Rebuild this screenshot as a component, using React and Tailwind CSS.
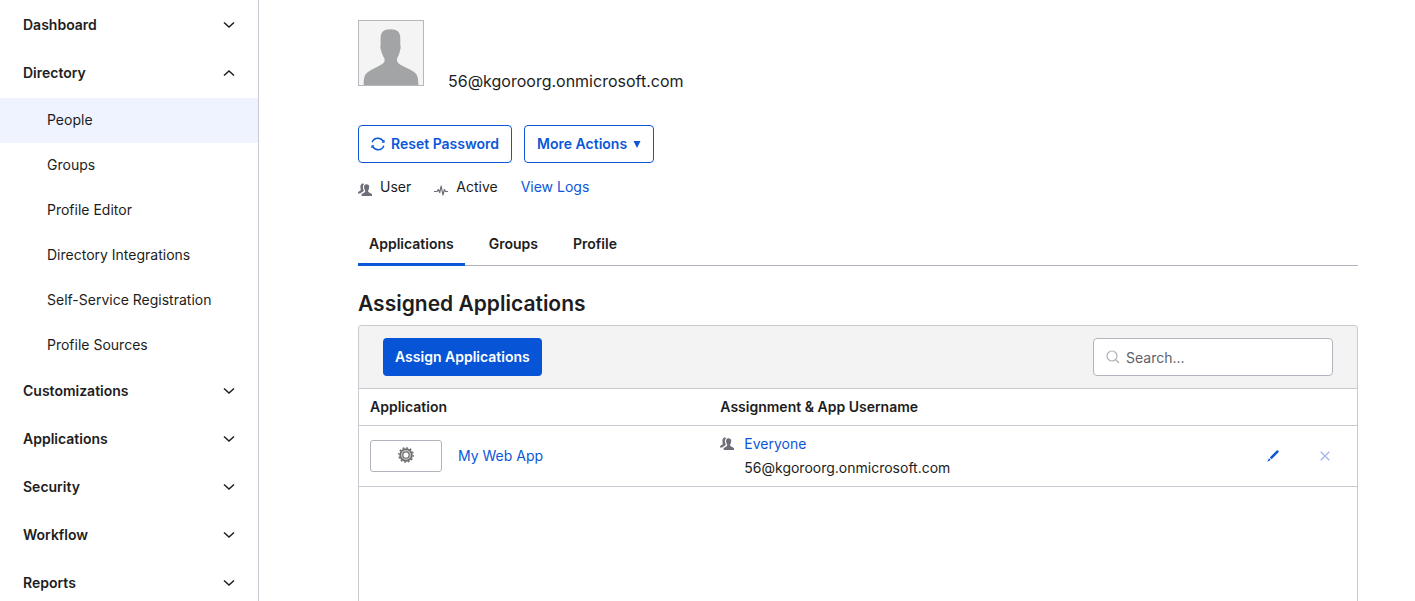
import React from "react";

const directoryItems = [
  "People",
  "Groups",
  "Profile Editor",
  "Directory Integrations",
  "Self-Service Registration",
  "Profile Sources",
];

const sections = [
  { label: "Dashboard" },
  { label: "Directory", items: directoryItems },
  { label: "Customizations" },
  { label: "Applications" },
  { label: "Security" },
  { label: "Workflow" },
  { label: "Reports" },
];

function Chevron({ up }) {
  return (
    <svg width="12" height="8" viewBox="0 0 12 8" fill="none" stroke="currentColor" strokeWidth="1.5" aria-hidden="true">
      <path d={up ? "M1 6.5 6 2l5 4.5" : "M1 1.5 6 6l5-4.5"} />
    </svg>
  );
}

function PeopleIcon() {
  return (
    <svg width="14" height="14" viewBox="0 0 14 14" fill="#6e6e78" aria-hidden="true" className="shrink-0">
      <path d="M8.600 1.200c1.700 0 2.700 1.200 2.600 2.900-.1 1.500-.5 2.600-1 3.500-.2 1 .1 1.500.9 1.900l2 .9c.6.300.9.700.9 1.400v1.200H3.600v-1.200c0-.7.3-1.100.9-1.400l1.900-.9c.7-.4.9-.9.700-1.900-.5-.9-1-2-1.100-3.500C5.900 2.400 6.900 1.200 8.600 1.200Z" />
      <path d="M3.700.8C4.500.2 5.600.3 6.200.9 5.200 1.700 4.800 2.900 4.900 4.400c.1 1.200.4 2.100.8 2.800 0 .8-.3 1.200-1 1.500l-1.200.7c-.6.300-1 .7-1.200 1.100H0v-.8c0-.6.3-.9.800-1.200l1.300-.8c.7-.4.8-.9.600-1.700C2.100 4.300 2.300 1.700 3.700.8Z" />
    </svg>
  );
}

function PulseIcon() {
  return (
    <svg width="14" height="14" viewBox="0 0 14 14" fill="none" stroke="#6e6e78" strokeWidth="1.2" strokeLinejoin="round" aria-hidden="true" className="shrink-0">
      <path d="M0 8.500h3L4.300 6.500l1.400 3L7.200 3l1.700 9L10.400 6.500l1.100 2H14" />
    </svg>
  );
}

function RefreshIcon() {
  return (
    <svg width="14" height="14" viewBox="0 0 14 14" fill="none" stroke="currentColor" strokeWidth="1.4" aria-hidden="true">
      <path d="M1.200 5.300C2 2.900 4.200 1.300 6.900 1.300c2.300 0 4.300 1.200 5.300 3.100M12.800 8.700c-.8 2.400-3 4-5.700 4-2.300 0-4.300-1.200-5.300-3.100" />
      <path d="M12.900 3v2.100h-2M1.100 11V8.900h2" />
    </svg>
  );
}

function GearIcon() {
  return (
    <svg width="18" height="18" viewBox="-9 -9 18 18" aria-hidden="true">
      <circle r="7.200" fill="none" stroke="#6a6a6a" strokeWidth="1.300" strokeDasharray="1.900 1.870" />
      <circle r="5.900" fill="#c4c4c4" stroke="#6c6c6c" strokeWidth="1.600" />
      <circle r="3.200" fill="#fff" stroke="#747474" strokeWidth="1.300" />
    </svg>
  );
}

function Sidebar() {
  return (
    <aside className="w-[259px] shrink-0 overflow-y-auto border-r border-[#c9c9d1] pt-0.5 [scrollbar-width:none]">
      <nav aria-label="Main">
        {sections.map(({ label, items }) => (
          <div key={label}>
            <button type="button" aria-expanded={!!items} className="flex h-12 w-full items-center justify-between pr-[23px] pb-0.5 pl-[23px] font-semibold">
              {label}
              <Chevron up={!!items} />
            </button>
            {items && (
              <ul>
                {items.map((item) => (
                  <li key={item}>
                    <a
                      href="#"
                      aria-current={item === "People" ? "page" : undefined}
                      className="flex h-[45px] items-center pb-0.5 pl-[47px] aria-[current=page]:bg-[#eff2ff]"
                    >
                      {item}
                    </a>
                  </li>
                ))}
              </ul>
            )}
          </div>
        ))}
      </nav>
    </aside>
  );
}

function ProfileHeader() {
  return (
    <header>
      <div className="flex items-end gap-6">
        <svg width="66" height="66" viewBox="0 0 66 66" role="img" aria-label="User avatar">
          <rect x=".5" y=".5" width="65" height="65" fill="#f4f4f4" stroke="#b7b7c0" />
          <path fill="#a2a4a5" d="M32.500 9.200C39.500 9.200 42.300 12 42.300 18.500V25.500C43 26.500 42.700 29 42 30.500C41.500 34 40 36.500 39 38.500C38.700 41.500 39.500 43 42 44.500C47 47.500 52 48.800 56 52C59.500 54.500 60.300 58 60.300 65H5.700C5.700 58 6.500 54.500 10 52C14 48.800 18.500 47.500 23.500 44.500C26 43 27 41.500 26.500 38.500C25.300 36.500 23.800 34 23.200 30.500C22.400 29 22 26.500 22.600 25.500V18.500C22.600 12 25.500 9.200 32.500 9.200Z" />
        </svg>
        <h1 className="-mb-[7px] text-base leading-6">56@kgoroorg.onmicrosoft.com</h1>
      </div>
      <div className="mt-[39px] flex gap-3 font-semibold text-[#0b57d8]">
        <button type="button" className="flex h-[38px] items-center gap-1.5 rounded border border-[#0b57d8] px-3">
          <RefreshIcon />
          Reset Password
        </button>
        <button type="button" className="flex h-[38px] items-center gap-1.5 rounded border border-[#0b57d8] px-3">
          More Actions
          <svg width="8" height="8" viewBox="0 0 8 8" fill="currentColor" aria-hidden="true">
            <path d="M.5 1h7L4 8Z" />
          </svg>
        </button>
      </div>
      <div className="mt-3.5 flex items-center gap-[23px]">
        <span className="flex items-end gap-2"><PeopleIcon />User</span>
        <span className="flex items-end gap-2"><PulseIcon />Active</span>
        <a href="#" className="text-[#0b57d8]">View Logs</a>
      </div>
    </header>
  );
}

function Tabs() {
  return (
    <div role="tablist" className="mt-[29px] flex h-10 gap-[13px] border-b border-[#b3b3bd] font-semibold">
      {["Applications", "Groups", "Profile"].map((tab) => (
        <button
          key={tab}
          type="button"
          role="tab"
          aria-selected={tab === "Applications"}
          className="-mb-px border-b-[3px] border-transparent px-[11px] pb-0.5 aria-selected:border-[#0b57d8]"
        >
          {tab}
        </button>
      ))}
    </div>
  );
}

function AssignedApplications() {
  return (
    <section className="mt-6 flex flex-1 flex-col">
      <h2 className="text-[21px] leading-7 font-semibold">Assigned Applications</h2>
      <div className="mt-[7px] flex-1 rounded-t border-x border-t border-[#c9c9d1]">
        <div className="flex items-center justify-between rounded-t border-b border-[#c9c9d1] bg-[#f3f3f4] px-6 py-3">
          <button type="button" className="h-[38px] rounded bg-[#0755d6] px-3 font-semibold text-white">
            Assign Applications
          </button>
          <div className="flex h-[38px] w-60 items-center gap-1.5 rounded border border-[#b3b3bd] bg-white px-3">
            <svg width="14" height="14" viewBox="0 0 14 14" fill="none" stroke="#b0b0b8" strokeWidth="1.200" aria-hidden="true">
              <circle cx="6" cy="6" r="5" />
              <path d="m9.500 9.500 3.500 3.500" />
            </svg>
            <input type="text" aria-label="Search" placeholder="Search..." className="h-full min-w-0 flex-1 outline-none placeholder:text-[#60606b]" />
          </div>
        </div>
        <table className="w-full table-fixed border-collapse text-left">
          <thead>
            <tr className="h-9 border-b border-[#c9c9d1]">
              <th scope="col" className="w-[35%] pl-[11px] font-semibold">Application</th>
              <th scope="col" className="pl-3 font-semibold">Assignment &amp; App Username</th>
              <td className="w-[120px]" />
            </tr>
          </thead>
          <tbody>
            <tr className="h-[61px] border-b border-[#c9c9d1]">
              <td className="pl-[11px]">
                <div className="flex items-center gap-4">
                  <span className="flex h-8 w-[72px] items-center justify-center rounded-[3px] border border-[#b3b3bd] pb-0.5">
                    <GearIcon />
                  </span>
                  <a href="#" className="text-[#0b57d8]">My Web App</a>
                </div>
              </td>
              <td className="pl-3">
                <div className="flex items-start gap-2.5 leading-6">
                  <span className="pt-[5px]"><PeopleIcon /></span>
                  <div>
                    <a href="#" className="block text-[#0b57d8]">Everyone</a>
                    <p>56@kgoroorg.onmicrosoft.com</p>
                  </div>
                </div>
              </td>
              <td>
                <div className="flex items-center justify-between pr-[27px] pl-[30px]">
                  <button type="button" aria-label="Edit assignment" className="text-[#0b57d8]">
                    <svg width="12" height="12" viewBox="0 0 12 12" fill="currentColor" aria-hidden="true">
                      <path d="M10.200 0 12 1.800 4.600 9.200 2.800 7.400ZM2 8.200 3.800 10 .2 11.800Z" />
                    </svg>
                  </button>
                  <button type="button" aria-label="Remove assignment" className="text-[#a6b8ef]">
                    <svg width="10" height="10" viewBox="0 0 10 10" fill="none" stroke="currentColor" strokeWidth="1.400" aria-hidden="true">
                      <path d="m.7.7 8.600 8.600M9.300.7.7 9.300" />
                    </svg>
                  </button>
                </div>
              </td>
            </tr>
          </tbody>
        </table>
      </div>
    </section>
  );
}

export default function App() {
  return (
    <div className="flex h-screen overflow-hidden bg-white font-['Inter',sans-serif] text-sm leading-5 text-[#1d1d21]">
      <Sidebar />
      <main className="flex min-w-0 flex-1 flex-col pt-5 pr-[57px] pl-[99px]">
        <ProfileHeader />
        <Tabs />
        <AssignedApplications />
      </main>
    </div>
  );
}
